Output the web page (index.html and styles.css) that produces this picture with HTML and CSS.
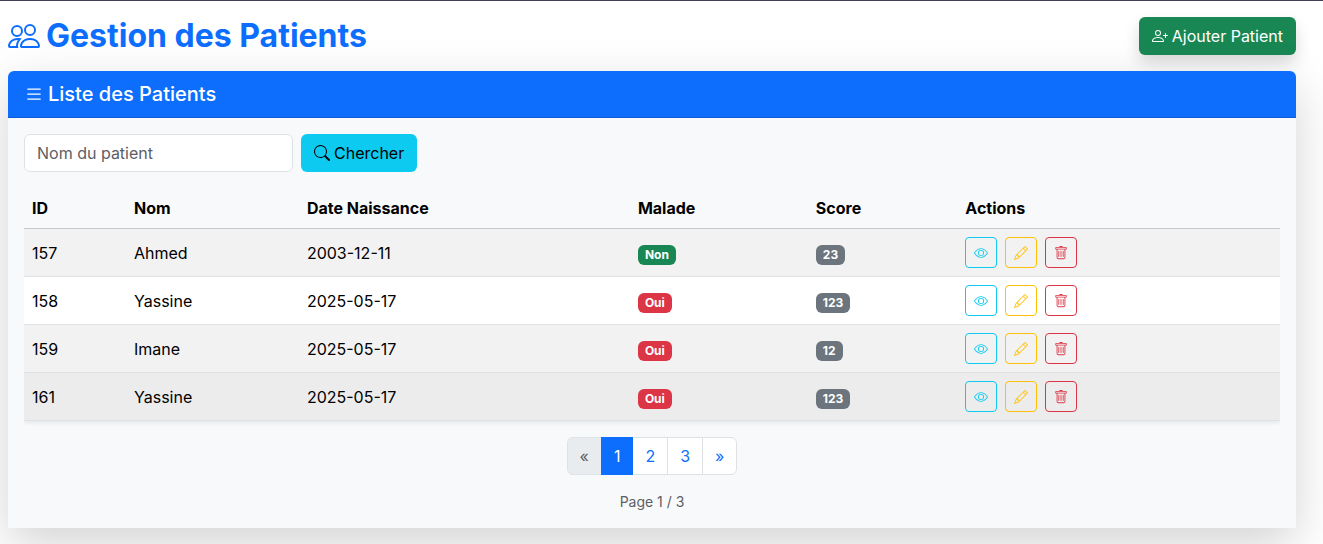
FILE: index.html
```html
<!DOCTYPE html>
<html lang="fr">
<head>
<meta charset="utf-8">
<title>Gestion des Patients</title>
<link rel="stylesheet" href="styles.css">
</head>
<body>
<svg class="sprite" aria-hidden="true">
  <symbol id="people" viewBox="0 0 16 16"><path d="M15 14s1 0 1-1-1-4-5-4-5 3-5 4 1 1 1 1zm-7.978-1L7 12.996c.001-.264.167-1.03.76-1.72C8.312 10.629 9.282 10 11 10c1.717 0 2.687.63 3.24 1.276.593.69.758 1.457.76 1.72l-.008.002-.014.002zM11 7a2 2 0 1 0 0-4 2 2 0 0 0 0 4m3-2a3 3 0 1 1-6 0 3 3 0 0 1 6 0M6.936 9.28a6 6 0 0 0-1.23-.247A7 7 0 0 0 5 9c-4 0-5 3-5 4q0 1 1 1h4.216A2.24 2.24 0 0 1 5 13c0-1.01.377-2.042 1.09-2.904.243-.294.526-.569.846-.816M4.92 10A5.5 5.5 0 0 0 4 13H1c0-.26.164-1.03.76-1.724.545-.636 1.492-1.256 3.16-1.275ZM1.5 5.5a3 3 0 1 1 6 0 3 3 0 0 1-6 0m3-2a2 2 0 1 0 0 4 2 2 0 0 0 0-4"/></symbol>
  <symbol id="person-plus" viewBox="0 0 16 16"><path d="M6 8a3 3 0 1 0 0-6 3 3 0 0 0 0 6m2-3a2 2 0 1 1-4 0 2 2 0 0 1 4 0m4 8c0 1-1 1-1 1H1s-1 0-1-1 1-4 6-4 6 3 6 4m-1-.004c-.001-.246-.154-.986-.832-1.664C9.516 10.68 8.289 10 6 10s-3.516.68-4.168 1.332c-.678.678-.83 1.418-.832 1.664z"/><path d="M13.5 5a.5.5 0 0 1 .5.5V7h1.5a.5.5 0 0 1 0 1H14v1.5a.5.5 0 0 1-1 0V8h-1.5a.5.5 0 0 1 0-1H13V5.5a.5.5 0 0 1 .5-.5"/></symbol>
  <symbol id="list" viewBox="0 0 16 16"><path d="M2.5 12a.5.5 0 0 1 .5-.5h10a.5.5 0 0 1 0 1H3a.5.5 0 0 1-.5-.5m0-4a.5.5 0 0 1 .5-.5h10a.5.5 0 0 1 0 1H3a.5.5 0 0 1-.5-.5m0-4a.5.5 0 0 1 .5-.5h10a.5.5 0 0 1 0 1H3a.5.5 0 0 1-.5-.5"/></symbol>
  <symbol id="search" viewBox="0 0 16 16"><path d="M11.742 10.344a6.5 6.5 0 1 0-1.397 1.398h-.001q.044.06.098.115l3.85 3.85a1 1 0 0 0 1.415-1.414l-3.85-3.85a1 1 0 0 0-.115-.1zM12 6.5a5.5 5.5 0 1 1-11 0 5.5 5.5 0 0 1 11 0"/></symbol>
  <symbol id="eye" viewBox="0 0 16 16"><path d="M16 8s-3-5.5-8-5.5S0 8 0 8s3 5.5 8 5.5S16 8 16 8M1.173 8a13 13 0 0 1 1.66-2.043C4.12 4.668 5.88 3.5 8 3.5s3.879 1.168 5.168 2.457A13 13 0 0 1 14.828 8q-.086.13-.195.288c-.335.48-.83 1.12-1.465 1.755C11.879 11.332 10.119 12.5 8 12.5s-3.879-1.168-5.168-2.457A13 13 0 0 1 1.172 8z"/><path d="M8 5.5a2.5 2.5 0 1 0 0 5 2.5 2.5 0 0 0 0-5M4.5 8a3.5 3.5 0 1 1 7 0 3.5 3.5 0 0 1-7 0"/></symbol>
  <symbol id="pencil" viewBox="0 0 16 16"><path d="M12.146.146a.5.5 0 0 1 .708 0l3 3a.5.5 0 0 1 0 .708l-10 10a.5.5 0 0 1-.168.11l-5 2a.5.5 0 0 1-.65-.65l2-5a.5.5 0 0 1 .11-.168zM11.207 2.5 13.5 4.793 14.793 3.5 12.5 1.207zm1.586 3L10.5 3.207 4 9.707V10h.5a.5.5 0 0 1 .5.5v.5h.5a.5.5 0 0 1 .5.5v.5h.293zm-9.761 5.175-.106.106-1.528 3.821 3.821-1.528.106-.106A.5.5 0 0 1 5 12.5V12h-.5a.5.5 0 0 1-.5-.5V11h-.5a.5.5 0 0 1-.468-.325"/></symbol>
  <symbol id="trash" viewBox="0 0 16 16"><path d="M5.5 5.5A.5.5 0 0 1 6 6v6a.5.5 0 0 1-1 0V6a.5.5 0 0 1 .5-.5m2.5 0a.5.5 0 0 1 .5.5v6a.5.5 0 0 1-1 0V6a.5.5 0 0 1 .5-.5m3 .5a.5.5 0 0 0-1 0v6a.5.5 0 0 0 1 0z"/><path d="M14.5 3a1 1 0 0 1-1 1H13v9a2 2 0 0 1-2 2H5a2 2 0 0 1-2-2V4h-.5a1 1 0 0 1-1-1V2a1 1 0 0 1 1-1H6a1 1 0 0 1 1-1h2a1 1 0 0 1 1 1h3.5a1 1 0 0 1 1 1zM4.118 4 4 4.059V13a1 1 0 0 0 1 1h6a1 1 0 0 0 1-1V4.059L11.882 4zM2.5 3h11V2h-11z"/></symbol>
</svg>
<main class="page">
  <header class="page-head">
    <h1 class="title"><svg class="icon"><use href="#people"/></svg>Gestion des Patients</h1>
    <button class="btn btn-add" type="button"><svg class="icon"><use href="#person-plus"/></svg>Ajouter Patient</button>
  </header>
  <section class="card">
    <h2 class="card-head"><svg class="icon"><use href="#list"/></svg>Liste des Patients</h2>
    <div class="card-body">
      <form class="search">
        <input class="field" type="text" placeholder="Nom du patient" aria-label="Nom du patient">
        <button class="btn btn-search" type="button"><svg class="icon"><use href="#search"/></svg>Chercher</button>
      </form>
      <div class="table-wrap">
      <table class="table">
        <colgroup><col class="c-id"><col class="c-nom"><col class="c-date"><col class="c-malade"><col class="c-score"><col></colgroup>
        <thead>
          <tr><th>ID</th><th>Nom</th><th>Date Naissance</th><th>Malade</th><th>Score</th><th>Actions</th></tr>
        </thead>
        <tbody>
          <tr><td>157</td><td>Ahmed</td><td>2003-12-11</td><td><span class="badge no">Non</span></td><td><span class="badge">23</span></td>
            <td><div class="actions"><button class="act view" type="button" aria-label="Voir"><svg class="icon"><use href="#eye"/></svg></button><button class="act edit" type="button" aria-label="Modifier"><svg class="icon"><use href="#pencil"/></svg></button><button class="act del" type="button" aria-label="Supprimer"><svg class="icon"><use href="#trash"/></svg></button></div></td></tr>
          <tr><td>158</td><td>Yassine</td><td>2025-05-17</td><td><span class="badge yes">Oui</span></td><td><span class="badge">123</span></td>
            <td><div class="actions"><button class="act view" type="button" aria-label="Voir"><svg class="icon"><use href="#eye"/></svg></button><button class="act edit" type="button" aria-label="Modifier"><svg class="icon"><use href="#pencil"/></svg></button><button class="act del" type="button" aria-label="Supprimer"><svg class="icon"><use href="#trash"/></svg></button></div></td></tr>
          <tr><td>159</td><td>Imane</td><td>2025-05-17</td><td><span class="badge yes">Oui</span></td><td><span class="badge">12</span></td>
            <td><div class="actions"><button class="act view" type="button" aria-label="Voir"><svg class="icon"><use href="#eye"/></svg></button><button class="act edit" type="button" aria-label="Modifier"><svg class="icon"><use href="#pencil"/></svg></button><button class="act del" type="button" aria-label="Supprimer"><svg class="icon"><use href="#trash"/></svg></button></div></td></tr>
          <tr class="hovered"><td>161</td><td>Yassine</td><td>2025-05-17</td><td><span class="badge yes">Oui</span></td><td><span class="badge">123</span></td>
            <td><div class="actions"><button class="act view" type="button" aria-label="Voir"><svg class="icon"><use href="#eye"/></svg></button><button class="act edit" type="button" aria-label="Modifier"><svg class="icon"><use href="#pencil"/></svg></button><button class="act del" type="button" aria-label="Supprimer"><svg class="icon"><use href="#trash"/></svg></button></div></td></tr>
        </tbody>
      </table>
      </div>
      <nav class="pager" aria-label="Pagination">
        <a class="link disabled" href="#">«</a>
        <a class="link active" href="#">1</a>
        <a class="link" href="#">2</a>
        <a class="link" href="#">3</a>
        <a class="link" href="#">»</a>
      </nav>
      <p class="count">Page 1 / 3</p>
    </div>
  </section>
</main>
</body>
</html>
```
FILE: styles.css
```css
* { box-sizing: border-box; }

body {
  margin: 0;
  border-top: 1px solid #403e55;
  background: #fff;
  color: #212529;
  font: 400 16px/24px Inter, sans-serif;
  overflow-x: hidden;
}

.sprite { display: none; }

.icon {
  flex: none;
  width: 1em;
  height: 1em;
  fill: currentColor;
}

.page { padding: 16px 27px 16px 8px; }

.page-head {
  display: flex;
  justify-content: space-between;
  align-items: center;
  margin-bottom: 16px;
}

.title {
  display: flex;
  align-items: center;
  gap: 6px;
  margin: 0;
  color: #0d6efd;
  font-size: 32px;
  line-height: 38px;
  font-weight: 700;
}

.btn {
  display: flex;
  align-items: center;
  gap: 4px;
  padding: 6px 12px;
  border: 1px solid transparent;
  border-radius: 6px;
  font: inherit;
}

.btn-add {
  background: #198754;
  color: #fff;
  box-shadow: 0 8px 16px rgba(0, 0, 0, .15);
}

.btn-search { background: #0dcaf0; color: #000; }

.card {
  position: relative;
  border-radius: 6px;
  box-shadow: 0 16px 48px rgba(0, 0, 0, .175);
}

.card-head {
  display: flex;
  align-items: center;
  gap: 4px;
  margin: 0;
  padding: 8px 16px;
  border-bottom: 1px solid #0b5ed7;
  border-radius: 6px 6px 0 0;
  background: #0d6efd;
  color: #fff;
  font-size: 20px;
  line-height: 30px;
  font-weight: 500;
}

.card-body { padding: 16px; background: #f8f9fb; }

.search { display: flex; gap: 8px; margin: 0 0 16px; }

.field {
  width: 269px;
  padding: 6px 12px;
  border: 1px solid #dee2e6;
  border-radius: 6px;
  background: #fff;
  color: #212529;
  font: inherit;
}

.field::placeholder { color: #5c6064; opacity: 1; }

.table-wrap {
  padding-bottom: 16px;
  overflow: hidden;
}

.table {
  width: 100%;
  border-collapse: separate;
  border-spacing: 0;
  table-layout: fixed;
  box-shadow: 0 2px 4px rgba(0, 0, 0, .075);
  color: #000;
}

.c-id { width: 8.12%; }
.c-nom { width: 13.77%; }
.c-date { width: 26.35%; }
.c-malade { width: 14.17%; }
.c-score { width: 11.9%; }

.table th {
  padding: 8px;
  border-bottom: 1px solid #c6c7c8;
  background: #f8f9fb;
  text-align: left;
  font-weight: 700;
}

.table td {
  padding: 8px;
  border-bottom: 1px solid #dee2e6;
  background: #fff;
  vertical-align: middle;
}

.table tr:nth-child(odd) td { background: #f2f2f2; }
.table .hovered td { background: #ececec; }

.badge {
  display: inline-block;
  padding: 4px 7px;
  border-radius: 6px;
  background: #6c757d;
  color: #fff;
  font-size: 12px;
  line-height: 12px;
  font-weight: 700;
  vertical-align: baseline;
}

.badge.no { background: #198754; }
.badge.yes { background: #dc3545; }

.actions { display: flex; gap: 8px; }

.act {
  display: flex;
  padding: 8px;
  border: 1px solid currentColor;
  border-radius: 4px;
  background: none;
  font-size: 14px;
  line-height: 21px;
  height: 31px;
}

.view { color: #0dcaf0; }
.edit { color: #ffc107; }
.del { color: #dc3545; }

.pager {
  display: flex;
  justify-content: center;
  margin-bottom: 16px;
}

.link {
  padding: 6px 12px;
  border: 1px solid #dee2e6;
  background: #fff;
  color: #0d6efd;
  text-decoration: none;
}

.link + .link { margin-left: -1px; }
.link:first-child { border-radius: 6px 0 0 6px; }
.link:last-child { border-radius: 0 6px 6px 0; }
.link.disabled { background: #e9ecef; color: #5c6064; }

.link.active {
  z-index: 1;
  border-color: #0d6efd;
  background: #0d6efd;
  color: #fff;
}

.count {
  margin: 0;
  color: #5c6064;
  text-align: center;
  font-size: 14px;
  line-height: 21px;
}
```
